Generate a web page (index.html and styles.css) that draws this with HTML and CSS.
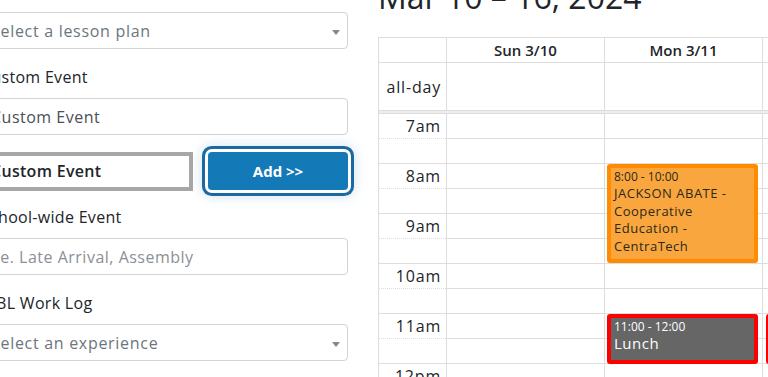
FILE: index.html
```html
<!DOCTYPE html>
<html lang="en">
<head>
    <meta charset="UTF-8">
    <meta name="viewport" content="width=device-width, initial-scale=1.0">
    <title>Schedule</title>
    <link rel="stylesheet" href="styles.css">
</head>
<body>
    <div class="page">
        <!-- left form -->
        <div class="form-col">
            <div class="select">Select a lesson plan<span class="caret"></span></div>
            <label class="field-label">Custom Event</label>
            <input class="field" type="text" value="Custom Event">
            <div class="add-row">
                <div class="event-chip">Custom Event</div>
                <button class="add-btn">Add &gt;&gt;</button>
            </div>
            <label class="field-label">School-wide Event</label>
            <input class="field" type="text" placeholder="i.e. Late Arrival, Assembly">
            <label class="field-label">WBL Work Log</label>
            <div class="select">Select an experience<span class="caret"></span></div>
        </div>

        <!-- calendar -->
        <div class="cal-col">
            <h2 class="cal-title">Mar 10 – 16, 2024</h2>
            <div class="cal">
                <table class="cal-table">
                    <colgroup>
                        <col class="axis-col">
                        <col class="day-col"><col class="day-col"><col class="day-col">
                    </colgroup>
                    <tr class="head-row">
                        <th></th>
                        <th>Sun 3/10</th>
                        <th>Mon 3/11</th>
                        <th>Tue 3/12</th>
                    </tr>
                    <tr class="allday-row">
                        <td class="axis">all-day</td>
                        <td></td><td></td><td></td>
                    </tr>
                    <tr class="divider-row"><td colspan="4"></td></tr>
                    <tr class="slot hour"><td class="axis">7am</td><td></td><td></td><td></td></tr>
                    <tr class="slot half"><td class="axis"></td><td></td><td></td><td></td></tr>
                    <tr class="slot hour"><td class="axis">8am</td><td></td><td></td><td></td></tr>
                    <tr class="slot half"><td class="axis"></td><td></td><td></td><td></td></tr>
                    <tr class="slot hour"><td class="axis">9am</td><td></td><td></td><td></td></tr>
                    <tr class="slot half"><td class="axis"></td><td></td><td></td><td></td></tr>
                    <tr class="slot hour"><td class="axis">10am</td><td></td><td></td><td></td></tr>
                    <tr class="slot half"><td class="axis"></td><td></td><td></td><td></td></tr>
                    <tr class="slot hour"><td class="axis">11am</td><td></td><td></td><td></td></tr>
                    <tr class="slot half"><td class="axis"></td><td></td><td></td><td></td></tr>
                    <tr class="slot hour"><td class="axis">12pm</td><td></td><td></td><td></td></tr>
                </table>

                <div class="event ev-coop">
                    <div class="ev-time">8:00 - 10:00</div>
                    <div class="ev-title">JACKSON ABATE - Cooperative Education - CentraTech Solutions / Work Experience</div>
                </div>
                <div class="event ev-lunch">
                    <div class="ev-time">11:00 - 12:00</div>
                    <div class="ev-title">Lunch</div>
                </div>
                <div class="event ev-lunch ev-next">
                    <div class="ev-time">11:00 - 12:00</div>
                    <div class="ev-title">Lunch</div>
                </div>
            </div>
        </div>
    </div>
</body>
</html>
```

FILE: styles.css
```css
body {
    margin: 0;
    font-family: 'Open Sans', 'Noto Sans', sans-serif;
    color: #212529;
    background: #fff;
    overflow: hidden;
    height: 377px;
}
.page {
    display: flex;
    margin-left: -22px;
    gap: 30px;
}
.form-col {
    width: 370px;
    flex: none;
    padding-top: 12px;
    display: flex;
    flex-direction: column;
    letter-spacing: 0.3px;
}
.select {
    position: relative;
    height: 37px;
    box-sizing: border-box;
    border: 1px solid #ced4da;
    border-radius: 4px;
    padding: 2px 12px 0;
    line-height: 33px;
    font-size: 16px;
    letter-spacing: 0.7px;
    color: #6c757d;
}
.caret {
    position: absolute;
    right: 7px;
    top: 17px;
    border-left: 4px solid transparent;
    border-right: 4px solid transparent;
    border-top: 5px solid #888;
}
.field-label {
    display: block;
    font-size: 16px;
    line-height: 24px;
    padding-left: 3px;
    margin: 16px 0 9px;
}
.field {
    height: 37px;
    box-sizing: border-box;
    border: 1px solid #ced4da;
    border-radius: 4px;
    padding: 0 12px;
    font-family: inherit;
    font-size: 16px;
    letter-spacing: 0.5px;
    color: #495057;
    width: 100%;
}
.field::placeholder {
    color: #8a9097;
}
.add-row {
    display: flex;
    align-items: flex-start;
    margin-top: 17px;
}
.event-chip {
    width: 215px;
    height: 39px;
    box-sizing: border-box;
    border: 4px solid #a7a7a7;
    padding-left: 9px;
    line-height: 31px;
    font-size: 16px;
    font-weight: 600;
    background: #fff;
}
.add-btn {
    margin-left: 15px;
    width: 140px;
    height: 38px;
    border: none;
    border-radius: 4px;
    background-color: #1479b7;
    color: #fff;
    font-family: inherit;
    font-size: 15px;
    font-weight: 700;
    box-shadow: 0 0 0 3px #fff, 0 0 0 6px #1a69a3, 0 0 12px 7px rgba(20, 121, 183, 0.18);
    cursor: pointer;
}
.add-row + .field-label {
    margin-top: 14px;
}
.cal-col {
    flex: 1;
}
.cal-title {
    font-size: 32px;
    font-weight: 400;
    line-height: 40px;
    margin: -23px 0 20px;
    color: #212529;
    white-space: nowrap;
}
.cal {
    position: relative;
}
.cal-table {
    border-collapse: collapse;
    table-layout: fixed;
    width: 542px;
}
.axis-col {
    width: 68px;
}
.day-col {
    width: 158px;
}
.cal-table th,
.cal-table td {
    border: 1px solid #ddd;
    padding: 0;
}
.head-row th {
    height: 24px;
    font-size: 15px;
    font-weight: 600;
    text-align: center;
}
.allday-row td {
    height: 47px;
}
.axis {
    text-align: right;
    padding-right: 5px !important;
    font-size: 16px;
    letter-spacing: 0.8px;
    white-space: nowrap;
}
.divider-row td {
    height: 2px;
    background: #eee;
}
.slot td {
    height: 24px;
    line-height: 24px;
}
.slot.half td {
    border-top: 1px dotted #ddd;
}
.slot.hour td.axis {
    border-bottom: none;
}
.event {
    position: absolute;
    left: 229px;
    width: 151px;
    box-sizing: border-box;
    border: 4px solid;
    border-radius: 3px;
    padding: 1px 3px;
    overflow: hidden;
}
.ev-time {
    font-size: 12px;
    line-height: 16px;
}
.ev-title {
    font-size: 13px;
    line-height: 17.7px;
    letter-spacing: 0.5px;
}
.ev-coop {
    top: 127px;
    height: 99px;
    border-color: #ff8c00;
    background: #faa63e;
    color: #2a2a1a;
}
.ev-lunch {
    top: 277px;
    height: 50px;
    border-color: #f00;
    background: #666;
    color: #fff;
}
.ev-lunch .ev-title {
    font-size: 15px;
    font-weight: 500;
}
.ev-next {
    left: 388px;
}
```
